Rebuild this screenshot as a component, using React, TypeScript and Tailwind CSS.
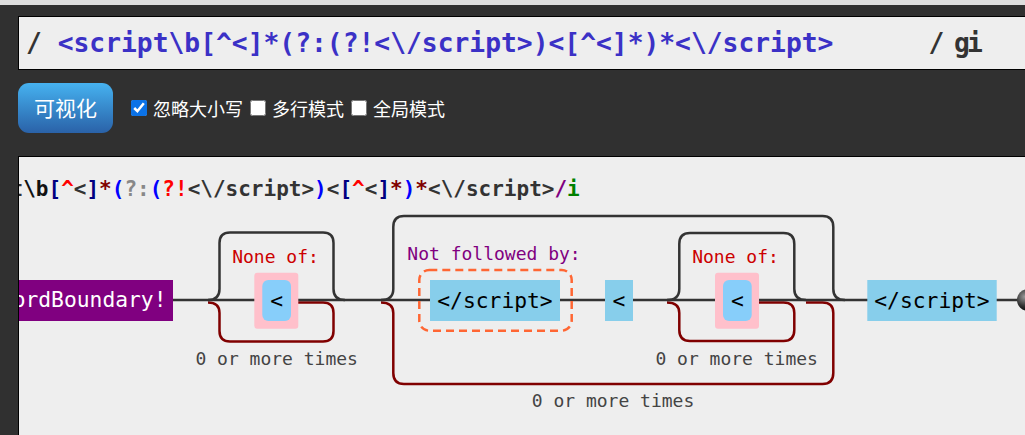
const mono = "font-['DejaVu_Sans_Mono',monospace]";
const cjk = "font-['Noto_Sans_CJK_SC','Noto_Sans',sans-serif]";

const regexParts: [string, string][] = [
  ["/", "text-[#800080]"],
  ["<script", "text-[#333]"],
  ["\\b", "text-[#111]"],
  ["[", "text-[#000080]"],
  ["^", "text-[#ff0000]"],
  ["<", "text-[#333]"],
  ["]", "text-[#000080]"],
  ["*", "text-[#800000]"],
  ["(", "text-[#0000ff]"],
  ["?:", "text-[#888]"],
  ["(", "text-[#0000ff]"],
  ["?!", "text-[#ff0000]"],
  ["<\\/script>", "text-[#333]"],
  [")", "text-[#0000ff]"],
  ["<", "text-[#333]"],
  ["[", "text-[#000080]"],
  ["^", "text-[#ff0000]"],
  ["<", "text-[#333]"],
  ["]", "text-[#000080]"],
  ["*", "text-[#800000]"],
  [")", "text-[#0000ff]"],
  ["*", "text-[#800000]"],
  ["<\\/script>", "text-[#333]"],
  ["/", "text-[#800080]"],
  ["i", "text-[#008000]"],
];

const options = [
  { label: "忽略大小写", checked: true },
  { label: "多行模式", checked: false },
  { label: "全局模式", checked: false },
];

function Label({ x, y, color, children }: { x: number; y: number; color: string; children: string }) {
  return (
    <text x={x} y={y} fill={color} fontSize={18} textAnchor="middle">
      {children}
    </text>
  );
}

function Literal({ x, w, text }: { x: number; w: number; text: string }) {
  return (
    <g>
      <rect x={x} y={280} width={w} height={41} fill="#87ceeb" />
      <text x={x + w / 2} y={307.5} fontSize={21.3} textAnchor="middle" fill="#000">
        {text}
      </text>
    </g>
  );
}

function NoneOf({ x }: { x: number }) {
  // pink set box with the rounded char inside
  return (
    <g>
      <rect x={x} y={272.7} width={44} height={56} rx={3} fill="#ffc0cb" />
      <rect x={x + 8} y={280} width={28.7} height={41} rx={6} fill="#87cefa" />
      <text x={x + 22.3} y={307.5} fontSize={21.3} textAnchor="middle" fill="#000">
        {"<"}
      </text>
    </g>
  );
}

function Diagram() {
  const line = "#333";
  const loop = "#800000";
  return (
    <svg
      width={1006}
      height={240}
      viewBox="19 205 1006 240"
      className={`block ${mono}`}
    >
      <defs>
        <radialGradient id="endDot" cx="35%" cy="35%" r="70%">
          <stop offset="0%" stopColor="#999" />
          <stop offset="60%" stopColor="#333" />
          <stop offset="100%" stopColor="#000" />
        </radialGradient>
      </defs>

      {/* repeat loops */}
      <g fill="none" stroke={loop} strokeWidth={2.5}>
        <path d="M298 302.5 H323 Q333.5 302.5 333.5 313 V331 Q333.5 341.5 323 341.5 H230 Q219.5 341.5 219.5 331 V313 Q219.5 302.5 208 302.5" />
        <path d="M806 302.5 H822.5 Q833.3 302.5 833.3 313 V373 Q833.3 384 822.5 384 H404 Q393.3 384 393.3 373 V313 Q393.3 302.5 381 302.5" />
        <path d="M759 302.5 H783.5 Q794.3 302.5 794.3 313 V330 Q794.3 341 783.5 341 H690 Q679.3 341 679.3 330 V313 Q679.3 302.5 667 302.5" />
      </g>

      {/* main rail and skip paths */}
      <g fill="none" stroke={line} strokeWidth={2.5}>
        <path d="M0 300 H1020" />
        <path d="M208 300 Q219.5 300 219.5 289 V243 Q219.5 232.5 230 232.5 H323 Q333.5 232.5 333.5 243 V289 Q333.5 300 345 300" />
        <path d="M381 300 Q393.3 300 393.3 289 V227 Q393.3 216 404 216 H822.5 Q833.3 216 833.3 227 V289 Q833.3 300 845 300" />
        <path d="M667 300 Q679.3 300 679.3 289 V244 Q679.3 233 690 233 H783.5 Q794.3 233 794.3 244 V289 Q794.3 300 806 300" />
      </g>

      <rect x={-2} y={280} width={175} height={41} fill="#800080" />
      <text x={166.5} y={307} fontSize={21.3} textAnchor="end" fill="#fff">
        WordBoundary!
      </text>

      <Label x={275.5} y={263.3} color="#cc0000">None of:</Label>
      <NoneOf x={254.3} />
      <Label x={276.7} y={365} color="#444">0 or more times</Label>

      <Label x={494} y={260} color="#800080">Not followed by:</Label>
      <rect
        x={419.3}
        y={270}
        width={152.4}
        height={60.7}
        rx={10}
        fill="none"
        stroke="#ff6633"
        strokeWidth={2.5}
        strokeDasharray="8 5"
      />
      <Literal x={430} w={130} text="</script>" />
      <Literal x={605} w={28} text="<" />

      <Label x={735.5} y={263.3} color="#cc0000">None of:</Label>
      <NoneOf x={715} />
      <Label x={736.7} y={365} color="#444">0 or more times</Label>

      <Label x={613} y={407} color="#444">0 or more times</Label>

      <Literal x={867.3} w={129.4} text="</script>" />
      <circle cx={1028} cy={300} r={11} fill="url(#endDot)" />
    </svg>
  );
}

export default function App() {
  return (
    <div className="h-[435px] w-full overflow-hidden bg-[#303030]">
      <div className="h-[5px] bg-[#dedede]" />
      <div className="flex flex-col pl-[18px]">
        <div
          className={`mt-[11px] h-[54px] border-y border-l border-black bg-[#eeeeee] pl-[7px] text-[26.3px] font-bold leading-[52px] whitespace-pre ${mono}`}
        >
          <span className="text-[#333]">/ </span>
          <span className="text-[#3b31c6]">{"<script\\b[^<]*(?:(?!<\\/script>)<[^<]*)*<\\/script>"}</span>
          <span>{"      "}</span>
          <span className="tracking-[-3px] text-[#333]">/ gi</span>
        </div>

        <div className="mt-[13px] flex h-[50px] items-center gap-[18px]">
          <button
            className={`h-[50px] w-[95px] rounded-[11px] bg-gradient-to-b from-[#46b2f0] to-[#2a62a8] text-[21px] text-white ${cjk}`}
          >
            可视化
          </button>
          <div className="flex items-center gap-[7px]">
            {options.map((o) => (
              <label key={o.label} className={`flex items-center gap-[6px] text-[18px] text-white ${cjk}`}>
                <input type="checkbox" defaultChecked={o.checked} className="m-0 h-4 w-4 accent-[#0b72e7]" />
                {o.label}
              </label>
            ))}
          </div>
        </div>

        <div className="mt-[23px] h-[290px] overflow-hidden border-t border-l border-black bg-[#eeeeee]">
          <div className={`ml-[-97px] h-[48px] whitespace-pre pt-[16px] text-[21px] font-bold leading-[32px] ${mono}`}>
            {regexParts.map(([t, c], i) => (
              <span key={i} className={c}>
                {t}
              </span>
            ))}
          </div>
          <Diagram />
        </div>
      </div>
    </div>
  );
}
